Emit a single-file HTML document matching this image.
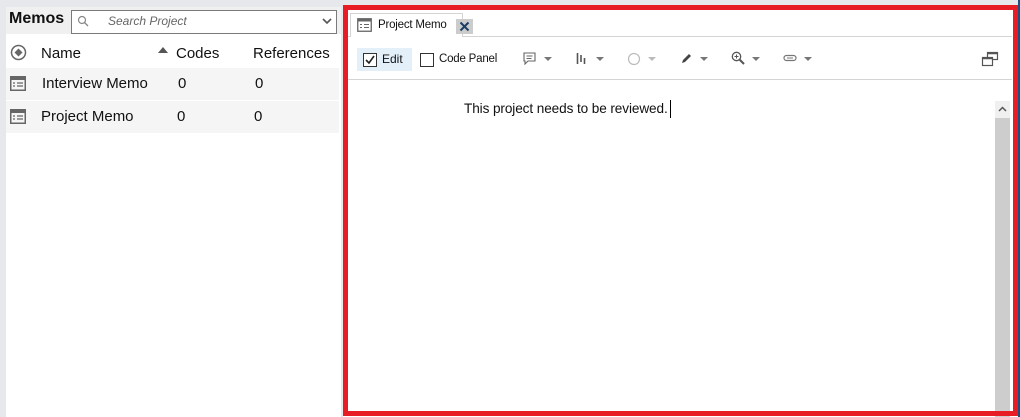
<!DOCTYPE html><html><head><style>
*{margin:0;padding:0;box-sizing:border-box}
body{width:1020px;height:417px;background:#e6e8eb;position:relative;overflow:hidden;font-family:"Liberation Sans",sans-serif}
.a{position:absolute}
</style></head><body>
<div class="a" style="left:6px;top:7px;width:335px;height:410px;background:#fff"></div>
<div class="a" style="left:6px;top:7px;width:335px;height:27px;background:#f0f0f0"></div>
<div class="a" style="left:9px;top:10px;font-weight:bold;font-size:16px;color:#111">Memos</div>
<div class="a" style="left:71px;top:10px;width:266px;height:24px;border:1px solid #7a7a7a;background:#fff"></div>
<svg class="a" style="left:77px;top:15px" width="12" height="12"><circle cx="5" cy="5" r="3.5" fill="none" stroke="#888" stroke-width="1.2"/><line x1="7.5" y1="7.5" x2="11" y2="11" stroke="#888" stroke-width="1.3"/></svg>
<div class="a" style="left:108px;top:14px;font-size:12px;font-style:italic;color:#666">Search Project</div>
<svg class="a" style="left:322px;top:18px" width="10" height="7"><path d="M1 1L5 5L9 1" fill="none" stroke="#555" stroke-width="1.6"/></svg>
<svg class="a" style="left:10px;top:44px" width="17" height="17"><circle cx="8.5" cy="8.5" r="7" fill="none" stroke="#666" stroke-width="1.5"/><path d="M8.5 4.5L12.5 8.5L8.5 12.5L4.5 8.5Z" fill="#666"/></svg>
<div class="a" style="left:41px;top:45px;font-size:15px;color:#111">Name</div>
<svg class="a" style="left:158px;top:47px" width="10" height="6"><path d="M0 6L5 0L10 6Z" fill="#555"/></svg>
<div class="a" style="left:176px;top:45px;font-size:15px;color:#111">Codes</div>
<div class="a" style="left:253px;top:45px;font-size:15px;color:#111">References</div>
<div class="a" style="left:6px;top:68px;width:333px;height:32px;background:#f5f5f5"></div>
<div class="a" style="left:6px;top:101px;width:333px;height:32px;background:#f5f5f5"></div>
<svg class="a" style="left:10px;top:76px" width="16" height="15"><rect x="0.75" y="0.75" width="14.5" height="13.5" fill="none" stroke="#666" stroke-width="1.5"/><rect x="1" y="1" width="14" height="3" fill="#666"/><path d="M3 7h2M7 7h6M3 10h2M7 10h6" stroke="#666" stroke-width="1.2"/></svg>
<svg class="a" style="left:10px;top:109px" width="16" height="15"><rect x="0.75" y="0.75" width="14.5" height="13.5" fill="none" stroke="#666" stroke-width="1.5"/><rect x="1" y="1" width="14" height="3" fill="#666"/><path d="M3 7h2M7 7h6M3 10h2M7 10h6" stroke="#666" stroke-width="1.2"/></svg>
<div class="a" style="left:42px;top:75px;font-size:15px;color:#111">Interview Memo</div>
<div class="a" style="left:178px;top:75px;font-size:15px;color:#111">0</div>
<div class="a" style="left:255px;top:75px;font-size:15px;color:#111">0</div>
<div class="a" style="left:41px;top:108px;font-size:15px;color:#111">Project Memo</div>
<div class="a" style="left:177px;top:108px;font-size:15px;color:#111">0</div>
<div class="a" style="left:254px;top:108px;font-size:15px;color:#111">0</div>

<div class="a" style="left:343px;top:5px;width:675px;height:412px;background:#fff"></div>
<div class="a" style="left:1018px;top:0;width:2px;height:417px;background:#1d4f80"></div>
<div class="a" style="left:348px;top:36px;width:664px;height:1px;background:#d4d4d4"></div>
<div class="a" style="left:348px;top:79px;width:664px;height:1px;background:#d4d4d4"></div>
<div class="a" style="left:350px;top:13px;width:113px;height:24px;border:1px solid #d4d4d4;border-bottom:none;background:#fff"></div>
<svg class="a" style="left:357px;top:18px" width="15" height="14"><rect x="0.75" y="0.75" width="13.5" height="12.5" fill="none" stroke="#666" stroke-width="1.3"/><rect x="1" y="1" width="13" height="2.5" fill="#666"/><path d="M3 6.5h2M7 6.5h5M3 9.5h2M7 9.5h5" stroke="#666" stroke-width="1.1"/></svg>
<div class="a" style="left:378px;top:19px;font-size:11.5px;letter-spacing:-0.2px;color:#111">Project Memo</div>
<div class="a" style="left:456px;top:19px;width:17px;height:15px;background:#ccc"></div>
<svg class="a" style="left:459px;top:21px" width="11" height="11"><path d="M1.5 1.5L9.5 9.5M9.5 1.5L1.5 9.5" stroke="#1c3f66" stroke-width="2"/></svg>
<div class="a" style="left:357px;top:48px;width:55px;height:23px;background:#e3f0fa"></div>
<div class="a" style="left:363px;top:53px;width:14px;height:14px;border:1px solid #333;background:#fff"></div>
<svg class="a" style="left:364px;top:54px" width="12" height="12"><path d="M2 6L5 9L10 2" fill="none" stroke="#222" stroke-width="1.6"/></svg>
<div class="a" style="left:382px;top:52px;font-size:12px;color:#111">Edit</div>
<div class="a" style="left:420px;top:53px;width:14px;height:14px;border:1px solid #333;background:#fff"></div>
<div class="a" style="left:439px;top:53px;font-size:11.5px;letter-spacing:-0.2px;color:#111">Code Panel</div>
<svg class="a" style="left:523px;top:52px" width="14" height="13"><path d="M1 1h11v8h-7l-3 3v-3h-1z" fill="none" stroke="#666" stroke-width="1.1"/><path d="M3.5 4h6M3.5 6.5h5" stroke="#666"/></svg>
<svg class="a" style="left:576px;top:52px" width="12" height="13"><path d="M1.5 1v11M5 3v7M8.5 6v6" stroke="#555" stroke-width="1.6"/></svg>
<svg class="a" style="left:627px;top:52px" width="14" height="14"><circle cx="7" cy="7" r="5.5" fill="none" stroke="#bbb" stroke-width="1.2"/></svg>
<svg class="a" style="left:680px;top:52px" width="12" height="13"><path d="M2 11L3 8L9 2L11 4L5 10Z" fill="#444"/></svg>
<svg class="a" style="left:731px;top:51px" width="14" height="14"><circle cx="5.5" cy="5.5" r="4.2" fill="none" stroke="#555" stroke-width="1.3"/><path d="M3.5 5.5h4M5.5 3.5v4" stroke="#555"/><path d="M8.5 8.5L13 13" stroke="#555" stroke-width="2"/></svg>
<svg class="a" style="left:783px;top:54px" width="14" height="9"><rect x="1" y="1.5" width="12" height="5" rx="2.5" fill="none" stroke="#777" stroke-width="1.2"/><path d="M4 4h6" stroke="#777"/></svg>
<svg class="a" width="10" height="6" style="left:543px;top:56px"><path d="M1 1h8L5 5z" fill="#777"/></svg>
<svg class="a" width="10" height="6" style="left:595px;top:56px"><path d="M1 1h8L5 5z" fill="#777"/></svg>
<svg class="a" width="10" height="6" style="left:647px;top:56px"><path d="M1 1h8L5 5z" fill="#bbb"/></svg>
<svg class="a" width="10" height="6" style="left:699px;top:56px"><path d="M1 1h8L5 5z" fill="#777"/></svg>
<svg class="a" width="10" height="6" style="left:751px;top:56px"><path d="M1 1h8L5 5z" fill="#777"/></svg>
<svg class="a" width="10" height="6" style="left:803px;top:56px"><path d="M1 1h8L5 5z" fill="#777"/></svg>
<svg class="a" style="left:981px;top:51px" width="18" height="16"><rect x="6.5" y="1.5" width="10" height="7" fill="#fff" stroke="#555" stroke-width="1.2"/><rect x="1.5" y="6.5" width="10" height="8" fill="#fff" stroke="#555" stroke-width="1.2"/><path d="M1.5 7.5h10M6.5 2.5h10" stroke="#555" stroke-width="1.5"/></svg>
<div class="a" style="left:464px;top:101px;font-size:13.6px;letter-spacing:-0.1px;color:#111">This project needs to be reviewed.</div>
<div class="a" style="left:670px;top:100px;width:1px;height:18px;background:#000"></div>
<div class="a" style="left:995px;top:101px;width:15px;height:17px;background:#f0f0f0"></div>
<svg class="a" style="left:998px;top:106px" width="9" height="6"><path d="M1 5L4.5 1.5L8 5" fill="none" stroke="#555" stroke-width="1.5"/></svg>
<div class="a" style="left:995px;top:118px;width:15px;height:299px;background:#cdcdcd"></div>
<div class="a" style="left:343px;top:5px;width:675px;height:411px;border:5px solid #e81c24"></div>
</body></html>
